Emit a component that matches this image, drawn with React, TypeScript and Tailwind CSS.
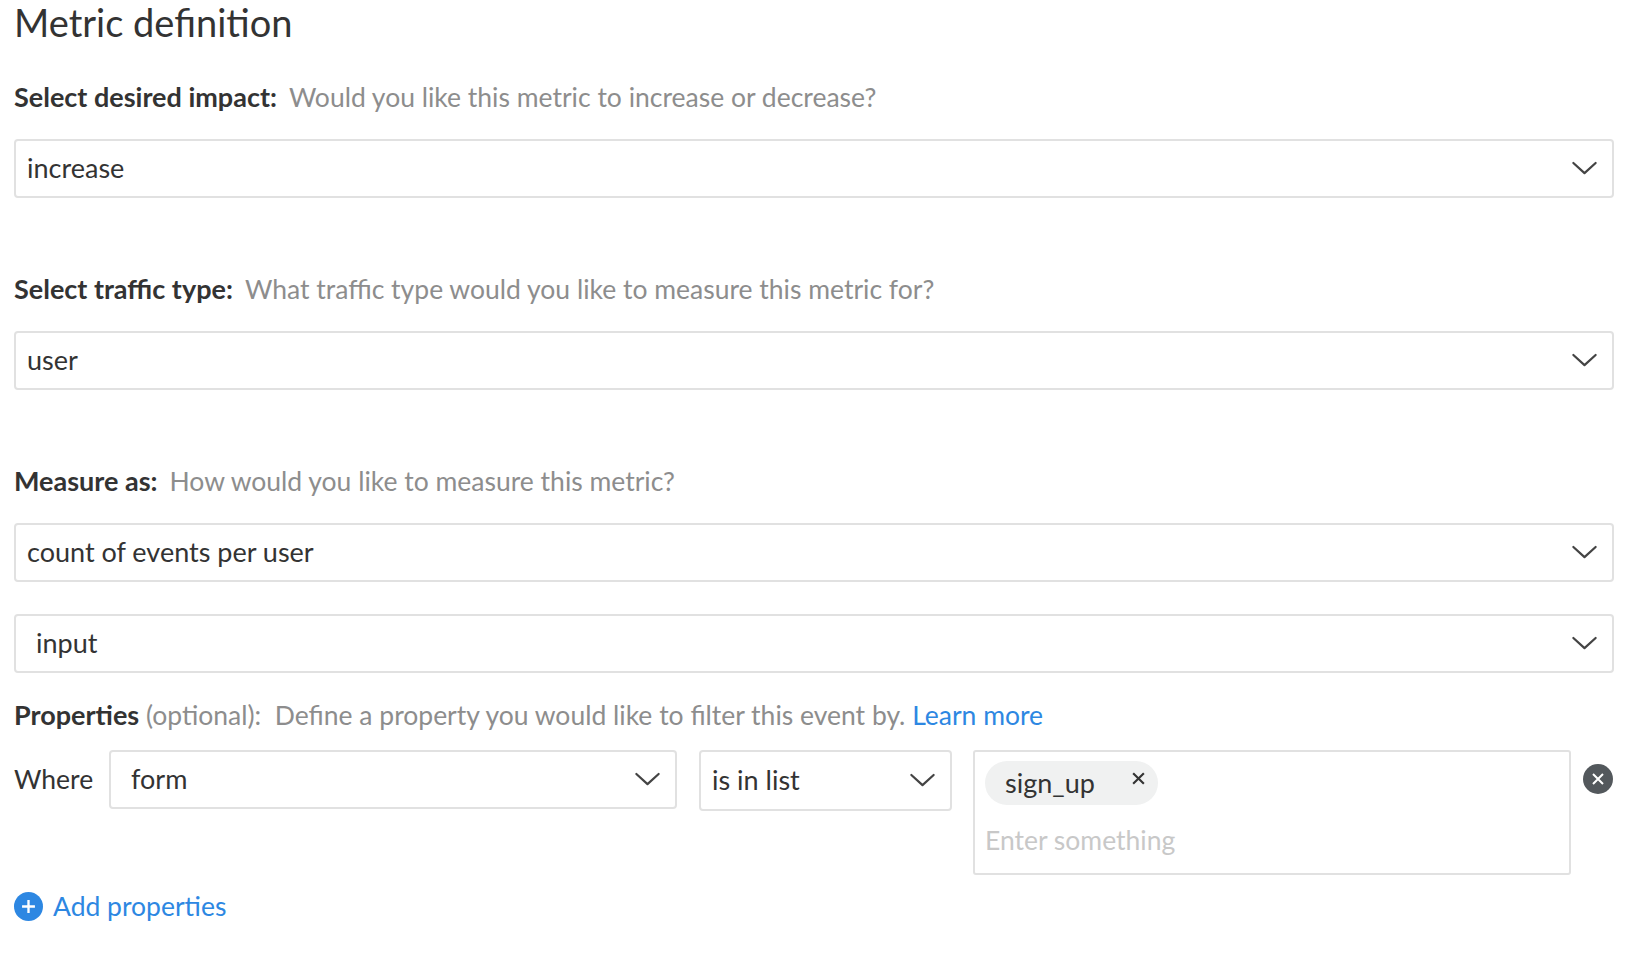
import React from "react";

const Chevron = ({ size = 27 }: { size?: number }) => (
  <svg width={size} height={size * 0.6} viewBox="0 0 26 16" fill="none" stroke="#444" strokeWidth="2.2" strokeLinecap="round" strokeLinejoin="round">
    <path d="M2 3 L13 13 L24 3" />
  </svg>
);

const Select = ({ value, pad = "pl-[11px]" }: { value: string; pad?: string }) => (
  <div className={`h-[59px] w-[1600px] border-2 border-[#e1e1e1] rounded-[4px] flex items-center justify-between ${pad} pr-[14px]`}>
    <span className="text-[27px] text-[#333]">{value}</span>
    <Chevron />
  </div>
);

const Label = ({ b, t }: { b: string; t: string }) => (
  <div className="leading-[32px] flex gap-[12px] items-baseline">
    <span className="font-bold text-[27px] text-[#333]">{b}</span>
    <span className="text-[26.5px] text-[#8d8d8d]">{t}</span>
  </div>
);

export default function App() {
  return (
    <div className="bg-white w-[1652px] h-[958px] pl-[14px] pt-[2px]" style={{ fontFamily: "'Source Sans Pro', Lato, 'Liberation Sans', sans-serif" }}>
      <div className="text-[38px] leading-[40px] text-[#333] font-normal">Metric definition</div>
      <div className="mt-[39px]"><Label b="Select desired impact:" t="Would you like this metric to increase or decrease?" /></div>
      <div className="mt-[26px]"><Select value="increase" /></div>
      <div className="mt-[75px]"><Label b="Select traffic type:" t="What traffic type would you like to measure this metric for?" /></div>
      <div className="mt-[26px]"><Select value="user" /></div>
      <div className="mt-[75px]"><Label b="Measure as:" t="How would you like to measure this metric?" /></div>
      <div className="mt-[26px]"><Select value="count of events per user" /></div>
      <div className="mt-[32px]"><Select value="input" pad="pl-[20px]" /></div>
      <div className="mt-[26px] leading-[32px]">
        <span className="font-bold text-[27px] text-[#333]">Properties</span>
        <span className="text-[26.5px] text-[#8d8d8d]"> (optional):&nbsp; Define a property you would like to filter this event by. </span>
        <span className="text-[26.5px] text-[#2d87e2]">Learn more</span>
      </div>
      <div className="mt-[15px] flex items-start">
        <div className="w-[95px] h-[59px] flex items-center text-[26.5px] text-[#333]">Where</div>
        <div className="w-[568px] h-[59px] border-2 border-[#e1e1e1] rounded-[4px] flex items-center justify-between pl-[20px] pr-[14px]">
          <span className="text-[27px] text-[#333]">form</span>
          <Chevron />
        </div>
        <div className="ml-[22px] w-[253px] h-[61px] border-2 border-[#e1e1e1] rounded-[4px] flex items-center justify-between pl-[11px] pr-[14px]">
          <span className="text-[27px] text-[#333]">is in list</span>
          <Chevron />
        </div>
        <div className="ml-[21px] w-[598px] h-[125px] border-2 border-[#e1e1e1] rounded-[3px] px-[10px] pt-[9px]">
          <div className="inline-flex items-start h-[44px] w-[173px] rounded-full bg-[#f0f1f1] pl-[20px]">
            <span className="text-[27px] text-[#333] leading-[44px]">sign_up</span>
            <svg className="ml-[36px] mt-[10px]" width="15" height="15" viewBox="0 0 14 14" stroke="#333" strokeWidth="2"><path d="M2 2 L12 12 M12 2 L2 12" /></svg>
          </div>
          <div className="mt-[15px] text-[26.5px] text-[#c8c8c8] leading-[40px]">Enter something</div>
        </div>
        <div className="ml-[12px] mt-[14px] w-[30px] h-[30px] rounded-full bg-[#53585c] flex items-center justify-center">
          <svg width="12" height="12" viewBox="0 0 12 12" stroke="#fff" strokeWidth="2"><path d="M1 1 L11 11 M11 1 L1 11" /></svg>
        </div>
      </div>
      <div className="mt-[16px] flex items-center gap-[10px]">
        <div className="w-[29px] h-[29px] rounded-full bg-[#2d87e2] flex items-center justify-center">
          <svg width="15" height="15" viewBox="0 0 14 14" stroke="#fff" strokeWidth="2.2"><path d="M7 1 V13 M1 7 H13" /></svg>
        </div>
        <span className="text-[26.5px] leading-[30px] text-[#2d87e2]">Add properties</span>
      </div>
    </div>
  );
}
